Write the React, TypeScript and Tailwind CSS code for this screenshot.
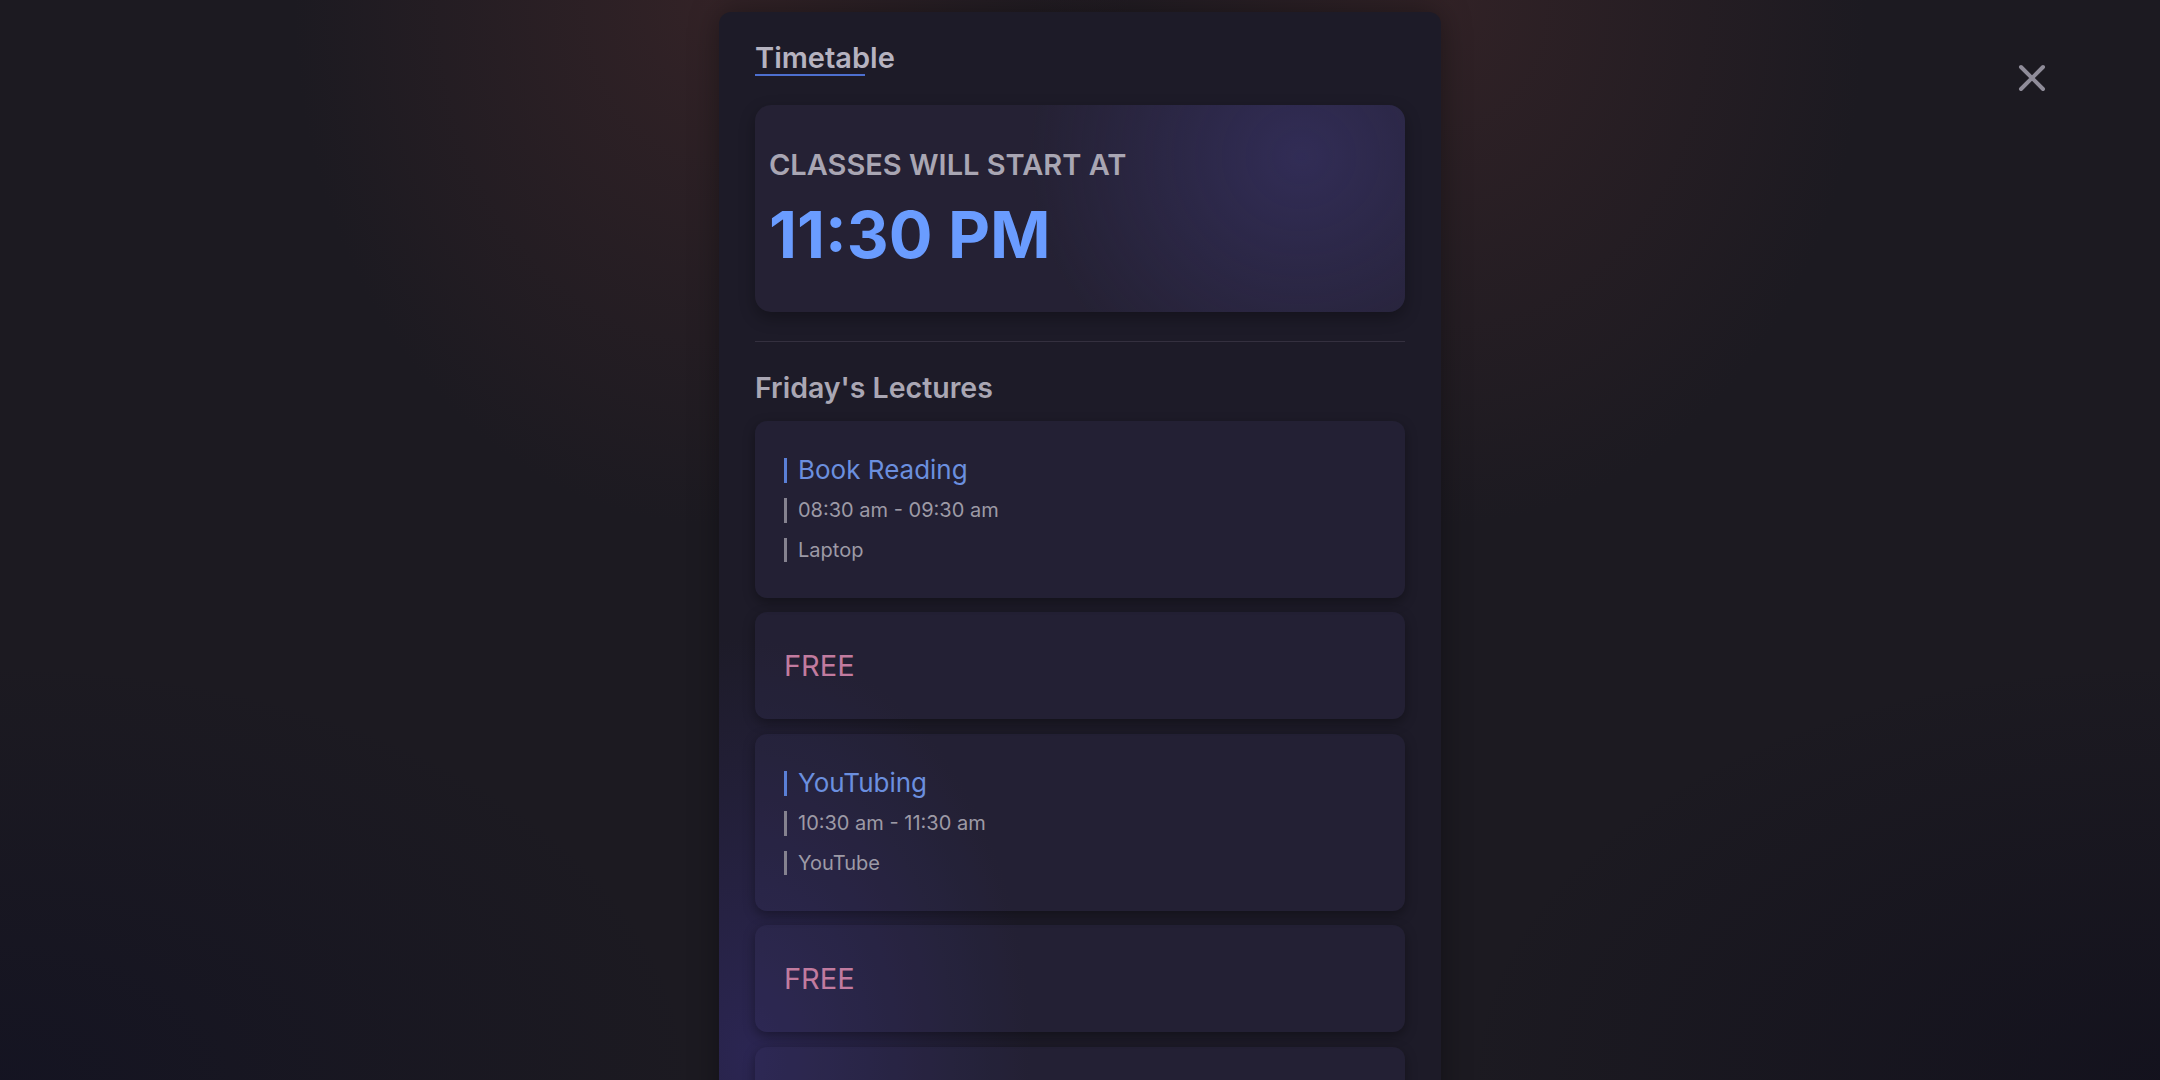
export default function App() {
  const lectures = [
    { title: 'Book Reading', time: '08:30 am - 09:30 am', place: 'Laptop' },
    null,
    { title: 'YouTubing', time: '10:30 am - 11:30 am', place: 'YouTube' },
    null,
  ]

  return (
    <div
      className="relative flex h-[1080px] w-full justify-center overflow-hidden bg-[#1c1a21] bg-[radial-gradient(ellipse_560px_700px_at_33%_0%,rgba(66,40,42,0.6),transparent_75%),radial-gradient(ellipse_560px_700px_at_67%_0%,rgba(66,40,42,0.55),transparent_75%),radial-gradient(ellipse_1000px_600px_at_0%_100%,rgba(18,18,34,0.75),transparent_70%),radial-gradient(ellipse_1000px_600px_at_100%_100%,rgba(16,15,28,0.7),transparent_70%)] font-['Inter','Noto_Sans',sans-serif]"
    >
      <div className="mt-[12px] h-[1100px] w-[722px] shrink-0 rounded-[12px] bg-[#1d1b28] bg-[radial-gradient(ellipse_380px_560px_at_4%_95%,rgba(62,52,140,0.42),transparent_75%)] px-[36px] pt-[31px] shadow-[0_0_30px_rgba(0,0,0,0.35)]">
        <h1 className="text-[29px] font-semibold leading-none text-[#b6b3c0]">Timetable</h1>
        <div className="mt-[2px] h-[2px] w-[110px] bg-[#4d6fcf]" />

        <div className="mt-[29px] flex h-[207px] flex-col rounded-[16px] bg-[rgba(70,62,100,0.2)] bg-[radial-gradient(ellipse_340px_320px_at_84%_25%,rgba(62,56,120,0.5),transparent_80%)] px-[14px] pt-[45px] shadow-[0_6px_16px_rgba(0,0,0,0.3)]">
          <p className="text-[29px] font-semibold leading-none text-[#a9a6b3]">CLASSES WILL START AT</p>
          <p className="mt-[23px] text-[65px] font-bold leading-none text-[#6a9cff]">11:30 PM</p>
        </div>

        <div className="mt-[29px] h-px bg-[#34303f]" />

        <h2 className="mt-[32px] text-[28.5px] font-semibold leading-none text-[#aaa7b4]">Friday's Lectures</h2>

        <div className="mt-[18px] flex flex-col gap-[14.5px]">
          {lectures.map((l, i) =>
            l ? (
              <div
                key={i}
                className="flex h-[177px] flex-col gap-[15px] rounded-[12px] bg-[rgba(60,56,100,0.2)] pl-[29px] pt-[37px] shadow-[0_4px_12px_rgba(0,0,0,0.35)]"
              >
                <div className="flex h-[25px] items-center border-l-[3px] border-[#5a7fd6] pl-[11px] text-[26px] leading-none text-[#6b8fdf]">
                  {l.title}
                </div>
                <div className="flex h-[25px] items-center border-l-[3px] border-[#85828f] pl-[11px] text-[20px] leading-none text-[#9d9aa6]">
                  {l.time}
                </div>
                <div className="flex h-[24px] items-center border-l-[3px] border-[#85828f] pl-[11px] text-[20px] leading-none text-[#9d9aa6]">
                  {l.place}
                </div>
              </div>
            ) : (
              <div
                key={i}
                className="flex h-[107px] items-center rounded-[12px] bg-[rgba(60,56,100,0.2)] pl-[29px] shadow-[0_4px_12px_rgba(0,0,0,0.35)]"
              >
                <span className="text-[29px] leading-none text-[#c17b9f]">FREE</span>
              </div>
            ),
          )}
          <div className="h-[120px] rounded-[12px] bg-[rgba(60,56,100,0.2)] shadow-[0_4px_12px_rgba(0,0,0,0.35)]" />
        </div>
      </div>

      <button className="absolute right-[113px] top-[63px] h-[29px] w-[29px]">
        <svg viewBox="0 0 28 28" width="28" height="28">
          <path d="M3 3L25 25M25 3L3 25" stroke="#8f8c99" strokeWidth="4" strokeLinecap="round" />
        </svg>
      </button>
    </div>
  )
}
